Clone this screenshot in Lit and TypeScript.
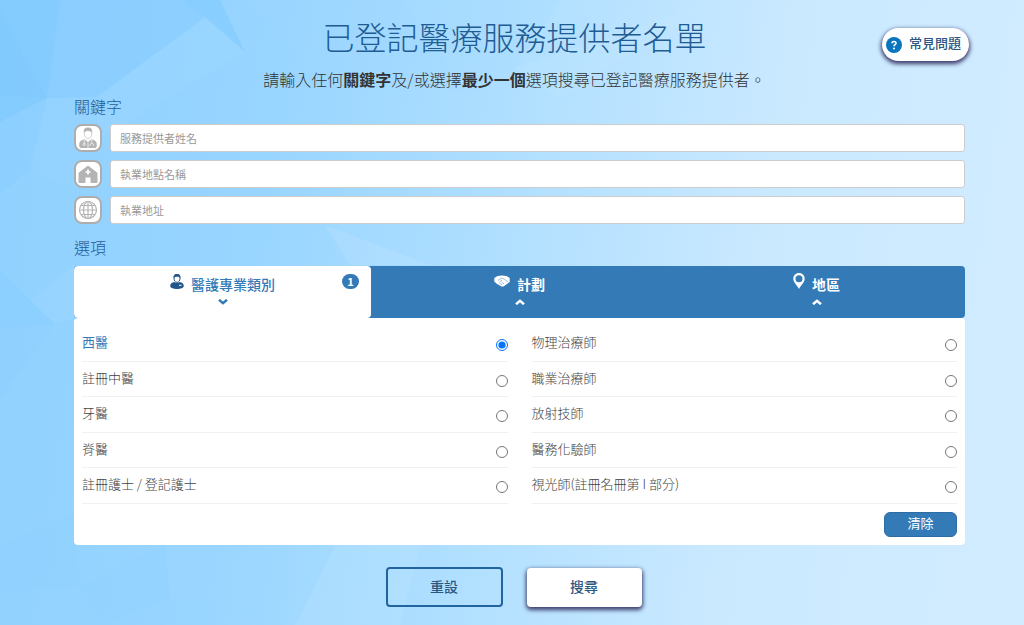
import { LitElement, html, css, svg } from "lit";
import { customElement, state } from "lit/decorators.js";

const LEFT = ["西醫", "註冊中醫", "牙醫", "脊醫", "註冊護士 / 登記護士"];
const RIGHT = ["物理治療師", "職業治療師", "放射技師", "醫務化驗師", "視光師(註冊名冊第 I 部分)"];

const doctorIcon = html`<svg viewBox="0 0 24 26" width="20" height="24" aria-hidden="true">
  <path d="M7.500 7C7 2 9 1.500 12 1.500S17 2 16.500 7c0 4-2 6.500-4.500 6.500S7.500 11 7.500 7z" fill="#fff" stroke="#c4c4c4"/>
  <path d="M7 6.500C7 1.500 9 .5 12 .5s5 1 5 6c-2-2.500-8-2.500-10 0z" fill="#b4b4b4"/>
  <path d="M1.500 23v-3c0-3 2-4.500 6.500-5.500l4 3.500 4-3.500c4.500 1 6.500 2.500 6.500 5.500v3q0 2-2 2h-17q-2 0-2-2z" fill="#b4b4b4"/>
  <path d="M12 18.500V25M7.500 15v4M16.500 15v3.500" stroke="#fff" stroke-width=".8" fill="none"/>
  <circle cx="7.500" cy="20.500" r="1.400" fill="none" stroke="#fff" stroke-width=".9"/>
  <path d="M14.500 22.500v-2q2-3 4 0v2" fill="none" stroke="#fff" stroke-width=".9"/>
</svg>`;
const houseIcon = html`<svg viewBox="0 0 20 20" width="20" height="20" aria-hidden="true">
  <path d="M10 2 1 9v9.500h6V13h6v5.500h6V9z" fill="#b4b4b4" stroke="#b4b4b4" stroke-linejoin="round"/>
  <path d="M10 5.500v5M7.500 8h5" stroke="#fff" stroke-width="1.700"/>
</svg>`;
const globeIcon = html`<svg viewBox="0 0 20 20" width="20" height="20" fill="none" stroke="#b4b4b4" stroke-width="1.200" aria-hidden="true">
  <circle cx="10" cy="10" r="8.500"/><ellipse cx="10" cy="10" rx="4.500" ry="8.500"/>
  <path d="M10 1.500v17M1.500 10h17M3 5.500h14M3 14.500h14"/>
</svg>`;

const personIcon = html`<svg viewBox="0 0 14 16" width="14" height="17" aria-hidden="true">
  <path d="M4 4.500C4 2 5 1.200 7 1.200s3 .8 3 3.300S9 8.800 7 8.800 4 7 4 4.500z" fill="#fff" stroke="#22558a"/>
  <path d="M3.600 4.500C3.500 1 5 .4 7 .4s3.500.6 3.400 4.100C9 2.800 5 2.800 3.600 4.500z" fill="#22558a"/>
  <path d="M.2 12.500C.2 10.200 2 9 4.300 8.500c1.700 1.200 3.700 1.200 5.400 0 2.300.5 4.100 1.700 4.100 4 0 4-13.600 4-13.600 0z" fill="#22558a"/>
  <path d="M9 11.800h2.500" stroke="#fff"/>
</svg>`;
const handsIcon = html`<svg viewBox="0 0 16 13" width="16" height="16" aria-hidden="true">
  <path d="M.3 3.500 3.500 1.500 8 1l4.500.5 3.200 2v4L13 9.500 9.500 12H7.500L3 9.500.3 7z" fill="#fff"/>
  <path d="M4 6 7.500 3.500 10 4.500l4 3M5.500 7.500 8 5.500M8 10.500l-2.500-2M10 9.500 7.500 7.500" fill="none" stroke="#337ab7" stroke-width=".5"/>
</svg>`;
const pinIcon = html`<svg viewBox="0 0 12 16" width="12" height="16" aria-hidden="true">
  <path fill="#fff" fill-rule="evenodd" d="M6 0C2.500 0 .3 2.500.3 5.700.3 9 4 12 6 16c2-4 5.700-7 5.700-10.300C11.700 2.500 9.500 0 6 0zm0 2.300a3.500 3.500 0 1 1 0 7 3.500 3.500 0 0 1 0-7z"/>
</svg>`;

const chevron = (down: boolean) => html`<svg viewBox="0 0 10 6" width="10" height="6" aria-hidden="true">
  <path d=${down ? "M1 .8 5 4.200 9 .8" : "M1 5.200 5 1.800 9 5.200"} fill="none" stroke="currentColor" stroke-width="2.500"/>
</svg>`;

const facets: [string, string, number][] = [
  ["0,0 60,0 47,98 0,122", "#6abffd", 0.3],
  ["0,10 47,98 0,96", "#6abffd", 0.1],
  ["60,0 140,0 97,97 47,98", "#7cc8ff", 0.3],
  ["140,0 180,0 205,17 97,97", "#7cc8ff", 0.3],
  ["180,0 220,0 245,52 205,17", "#6fc2ff", 0.35],
  ["205,17 245,52 97,140 97,97", "#a9dcff", 0.15],
  ["0,122 47,98 30,170 0,195", "#84ccff", 0.3],
  ["47,98 97,97 74,190 30,170", "#a4daff", 0.15],
  ["0,270 30,300 55,324 0,328", "#7ac8ff", 0.2],
  ["30,300 74,265 74,318 55,324", "#a8dcff", 0.2],
  ["0,328 55,324 0,400", "#84ccff", 0.15],
  ["325,225 430,265 350,265", "#d0edff", 0.2],
  ["245,0 400,0 470,95 300,60", "#9ed7ff", 0.2],
  ["470,95 515,68 560,0 400,0", "#a5daff", 0.25],
  ["515,68 720,0 650,40 560,98", "#caeaff", 0.2],
  ["0,545 74,514 80,587 0,592", "#8ed0ff", 0.3],
  ["80,587 165,545 170,598 100,625", "#8ed2ff", 0.2],
  ["165,545 268,545 272,603 170,598", "#a0d8ff", 0.25],
  ["335,545 420,545 400,625 295,625", "#bfe7ff", 0.25],
];

@customElement("app-root")
export class AppRoot extends LitElement {
  @state() private selected = "西醫";

  static styles = css`
    :host {
      display: block;
      position: relative;
      min-height: 100vh;
      overflow: hidden;
      box-sizing: border-box;
      font-family: "Noto Sans CJK TC", "Noto Sans", sans-serif;
      color: #333;
      background: linear-gradient(98deg, #90d1ff 0%, #98d5ff 26%, #b2e0ff 50%, #cae9ff 72%, #d2ecff 100%);
    }
    * { box-sizing: border-box; }
    svg { display: block; flex: none; }
    .facets { position: absolute; inset: 0; width: 100%; height: 100%; }
    button, input { font-family: inherit; }
    main { position: relative; padding: 16px 59px 16px 74px; }
    header { padding-right: 10px; text-align: center; }
    h1 { margin: 0; font-size: 32px; line-height: 40px; font-weight: 300; color: #1f5c94; }
    .intro { margin: 11px 0 3px; font-size: 16px; line-height: 24px; font-weight: 300; }
    .intro b { font-weight: 700; }
    h2 { margin: 0; font-size: 16px; line-height: 24px; font-weight: 300; color: #1f5c94; }
    .faq {
      position: absolute; top: 28px; right: 55px; display: flex; align-items: center; gap: 7px;
      height: 33px; padding: 0 8px 0 4px; border-radius: 17px; background: #fff;
      color: #2b5680; font-size: 13px; line-height: 20px; font-weight: 500; text-decoration: none;
      box-shadow: 0 2px 4px 1px #3c3c6c;
    }
    .faq span { padding-bottom: 3px; }
    .fields { display: grid; gap: 8px; padding: 6px 0 11px; }
    .field { display: flex; gap: 8px; align-items: center; }
    .badge-icon {
      display: flex; align-items: center; justify-content: center; width: 28px; height: 28px; flex: none;
      border: 2px solid #adadad; border-radius: 8px; background: #fff; overflow: hidden;
    }
    .field input {
      flex: 1; min-width: 0; height: 28px; padding: 0 9px; border: 1px solid #ccc; border-radius: 3px;
      background: #fff; font-size: 11px; color: #555;
    }
    .field input::placeholder { color: #999; opacity: 1; }
    .panel { margin-top: 7px; }
    .tabs { display: grid; grid-template-columns: repeat(3, 1fr); background: #337ab7; border-radius: 4px; overflow: hidden; }
    .tab {
      position: relative; display: flex; flex-direction: column; align-items: center; gap: 4px; height: 52px;
      padding: 7px 0 0; border: 0; background: none; color: #fff; font-size: 14px; line-height: 22px; font-weight: 700;
    }
    .tab.active { background: #fff; color: #337ab7; font-weight: 500; border-radius: 4px; }
    .caption { display: flex; gap: 7px; }
    .count {
      position: absolute; right: 12px; top: 8px; min-width: 17px; height: 15px; border-radius: 8px;
      background: #337ab7; color: #fff; font-size: 11px; line-height: 15px; font-weight: 700; text-align: center;
    }
    .body { background: #fff; border-radius: 4px; padding: 8px; }
    .cols { display: grid; grid-template-columns: 1fr 1fr; column-gap: 24px; min-height: 178px; }
    .col { display: flex; flex-direction: column; }
    .row {
      flex: 1; display: flex; justify-content: space-between; padding: 6px 0 0;
      border-bottom: 1px solid #f0f0f0; font-size: 13px; line-height: 20px; font-weight: 300; color: #444;
    }
    .row.on { color: #337ab7; font-weight: 400; }
    .row input { width: 12px; height: 12px; margin: 7px 0 0; flex: none; }
    .foot { display: flex; justify-content: flex-end; padding-top: 8px; }
    .clear {
      width: 73px; height: 25px; border: 1px solid #2e6da4; border-radius: 6px; background: #337ab7;
      color: #fff; font-size: 13px; line-height: 20px; padding: 0 0 3px;
    }
    .actions { display: flex; justify-content: center; align-items: flex-end; gap: 24px; padding: 22px 12px 0 0; }
    .actions button { border-radius: 4px; font-size: 14px; line-height: 20px; font-weight: 500; color: #2b5680; padding: 0 0 3px; }
    .actions .reset { width: 117px; height: 40px; background: transparent; border: 2px solid #22649f; }
    .actions .search { width: 115px; height: 39px; background: #fff; border: 0; box-shadow: 0 2px 4px 1px #3c3c6c; }
  `;

  private row(name: string) {
    const on = this.selected === name;
    return html`<label class="row ${on ? "on" : ""}"><span>${name}</span>
      <input type="radio" name="profession" .checked=${on} @change=${() => (this.selected = name)} /></label>`;
  }

  private field(id: string, label: string, icon: unknown) {
    return html`<div class="field">
      <label class="badge-icon" for=${id}>${icon}</label>
      <input id=${id} type="text" placeholder=${label} aria-label=${label} />
    </div>`;
  }

  render() {
    return html`
      <svg class="facets" viewBox="0 0 1024 625" preserveAspectRatio="none" aria-hidden="true">
        ${facets.map(([points, fill, opacity]) => svg`<polygon points=${points} fill=${fill} opacity=${opacity}></polygon>`)}
      </svg>
      <main>
        <header>
          <h1>已登記醫療服務提供者名單</h1>
          <p class="intro">請輸入任何<b>關鍵字</b>及/或選擇<b>最少一個</b>選項搜尋已登記醫療服務提供者。</p>
        </header>
        <a class="faq" href="#faq">
          <svg viewBox="0 0 16 16" width="16" height="16" aria-hidden="true">
            <circle cx="8" cy="8" r="8" fill="#0a75bd"/>
            <path d="M6 6.300C6 3.800 10 3.900 10 6.200 10 7.700 8 7.600 8 9.300" fill="none" stroke="#fff" stroke-width="1.600"/>
            <circle cx="8" cy="11.500" r="1" fill="#fff"/>
          </svg><span>常見問題</span></a>
        <h2>關鍵字</h2>
        <div class="fields">
          ${this.field("provider", "服務提供者姓名", doctorIcon)}
          ${this.field("place", "執業地點名稱", houseIcon)}
          ${this.field("address", "執業地址", globeIcon)}
        </div>
        <h2>選項</h2>
        <section class="panel">
          <div class="tabs">
            <button class="tab active"><span class="caption">${personIcon}醫護專業類別</span>${chevron(true)}<span class="count">1</span></button>
            <button class="tab"><span class="caption">${handsIcon}計劃</span>${chevron(false)}</button>
            <button class="tab"><span class="caption">${pinIcon}地區</span>${chevron(false)}</button>
          </div>
          <div class="body">
            <div class="cols">
              <div class="col">${LEFT.map((n) => this.row(n))}</div>
              <div class="col">${RIGHT.map((n) => this.row(n))}</div>
            </div>
            <div class="foot"><button class="clear" @click=${() => (this.selected = "")}>清除</button></div>
          </div>
        </section>
        <div class="actions"><button class="reset">重設</button><button class="search">搜尋</button></div>
      </main>`;
  }
}
